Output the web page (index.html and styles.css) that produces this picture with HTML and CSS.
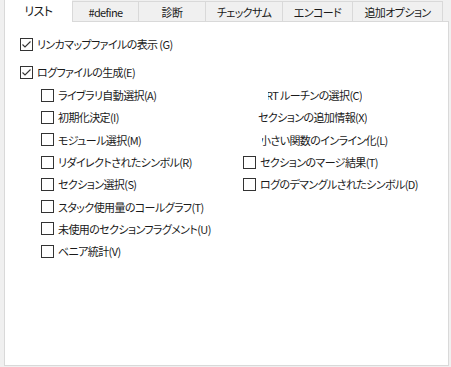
FILE: index.html
```html
<!DOCTYPE html>
<html lang="ja">
<head>
    <meta charset="UTF-8">
    <title>リスト</title>
    <link rel="stylesheet" href="styles.css">
</head>
<body>
    <div class="tabs">
        <div class="tab active" style="width: 68px">リスト</div>
        <div class="tab" style="width: 66px">#define</div>
        <div class="tab" style="width: 67px">診断</div>
        <div class="tab" style="width: 77px">チェックサム</div>
        <div class="tab" style="width: 70px">エンコード</div>
        <div class="tab last" style="width: 91px">追加オプション</div>
    </div>

    <div class="panel">
        <label class="option top">
            <span class="box checked"><svg width="13" height="13" viewBox="0 0 13 13"><polyline points="2.5,6.5 5,9 10.5,3.5" fill="none" stroke="#333" stroke-width="1.1"/></svg></span>
            <span class="text">リンカマップファイルの表示 (G)</span>
        </label>
        <label class="option top second">
            <span class="box checked"><svg width="13" height="13" viewBox="0 0 13 13"><polyline points="2.5,6.5 5,9 10.5,3.5" fill="none" stroke="#333" stroke-width="1.1"/></svg></span>
            <span class="text">ログファイルの生成(E)</span>
        </label>

        <div class="sub">
            <div class="col left">
                <label class="option"><span class="box"></span><span class="text">ライブラリ自動選択(A)</span></label>
                <label class="option"><span class="box"></span><span class="text">初期化決定(I)</span></label>
                <label class="option"><span class="box"></span><span class="text">モジュール選択(M)</span></label>
                <label class="option"><span class="box"></span><span class="text">リダイレクトされたシンボル(R)</span></label>
                <label class="option"><span class="box"></span><span class="text">セクション選択(S)</span></label>
                <label class="option"><span class="box"></span><span class="text">スタック使用量のコールグラフ(T)</span></label>
                <label class="option"><span class="box"></span><span class="text">未使用のセクションフラグメント(U)</span></label>
                <label class="option"><span class="box"></span><span class="text">ベニア統計(V)</span></label>
            </div>
            <div class="col right">
                <div class="option bare"><span class="clip c1"><span class="text">RT ルーチンの選択(C)</span></span></div>
                <div class="option bare"><span class="clip c2"><span class="text">セクションの追加情報(X)</span></span></div>
                <div class="option bare"><span class="clip c3"><span class="text">小さい関数のインライン化(L)</span></span></div>
                <label class="option"><span class="box"></span><span class="text">セクションのマージ結果(T)</span></label>
                <label class="option"><span class="box"></span><span class="text">ログのデマングルされたシンボル(D)</span></label>
            </div>
        </div>
    </div>
</body>
</html>
```

FILE: styles.css
```css
body {
    margin: 0;
    background: #f0f0f0;
    font-family: "Noto Sans CJK JP", "Noto Sans", sans-serif;
    font-size: 11px;
    letter-spacing: -0.6px;
    font-feature-settings: "palt";
    color: #1a1a1a;
    width: 451px;
    height: 367px;
    overflow: hidden;
}
.tabs {
    display: flex;
    padding-left: 4px;
    height: 21px;
    position: relative;
    z-index: 1;
}
.tab {
    box-sizing: border-box;
    margin-top: 1px;
    height: 20px;
    border-top: 1px solid #d9d9d9;
    border-left: 1px solid #d9d9d9;
    background: #f0f0f0;
    display: flex;
    align-items: center;
    justify-content: center;
    line-height: 1;
    padding-top: 1px;
}
.tab.last {
    border-right: 1px solid #d9d9d9;
}
.tab.active {
    margin-top: 0;
    height: 22px;
    border-top: none;
    background: #fff;
    padding-top: 0;
    padding-bottom: 1px;
    font-size: 12px;
}
.panel {
    box-sizing: border-box;
    margin-left: 4px;
    width: 445px;
    height: 345px;
    background: #fff;
    border: 1px solid #d9d9d9;
    padding: 11px 0 0 15px;
}
.option {
    display: flex;
    align-items: center;
    height: 22.3px;
    white-space: nowrap;
}
.option.top {
    height: 22px;
}
.option.second {
    margin-top: 6px;
}
.box {
    box-sizing: border-box;
    width: 13px;
    height: 13px;
    border: 1px solid #333;
    background: #fff;
    flex: none;
    margin-right: 4px;
    display: flex;
}
.box svg {
    margin: -1px;
}
.sub {
    display: flex;
    margin-top: 1px;
    margin-left: 21px;
}
.col.left {
    width: 202px;
}
.clip {
    overflow: hidden;
    display: block;
}
.clip.c1 {
    margin-left: 25px;
}
.clip.c1 .text {
    margin-left: -2px;
}
.clip.c2 {
    margin-left: 15px;
}
.clip.c3 {
    margin-left: 19px;
}
.clip.c3 .text {
    margin-left: -2px;
}
```
